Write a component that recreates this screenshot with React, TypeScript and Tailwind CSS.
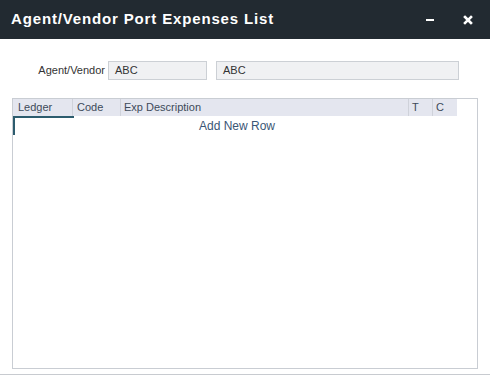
export default function App() {
  return (
    <div className="w-[490px] h-[375px] overflow-hidden bg-white font-['Liberation_Sans',Arial,sans-serif]">
      <div className="h-[39px] bg-[#222a31] flex items-center pl-[11px] pr-[17px]">
        <span className="text-white font-bold text-[15px] tracking-[0.85px] flex-1">
          Agent/Vendor Port Expenses List
        </span>
        <span className="w-[8px] h-[2px] bg-white mr-[29px] mt-[1px]" />
        <svg width="10" height="10" viewBox="0 0 10 10" className="mt-[1px]">
          <path d="M2 2 L8 8 M8 2 L2 8" stroke="white" strokeWidth="2.6" strokeLinecap="square" />
        </svg>
      </div>

      <div className="flex items-center mt-[22px] h-[18px] text-[11px]">
        <span className="w-[108px] text-right text-[#333] pr-[3px]">Agent/Vendor</span>
        <div className="w-[99px] h-[19px] bg-[#f0f1f3] border border-[#ccd0d5] text-[#333] pl-[6px] leading-[17px]">
          ABC
        </div>
        <div className="ml-[9px] w-[243px] h-[19px] bg-[#f0f1f3] border border-[#ccd0d5] text-[#333] pl-[6px] leading-[17px]">
          ABC
        </div>
      </div>

      <div className="ml-[12px] mt-[19px] w-[466px] h-[271px] border border-[#c9cdd3] bg-white">
        <div className="flex h-[17px] text-[11px] text-[#3d4a5a]">
          <div className="w-[60px] bg-[#e4e6ef] border-r border-[#cfd2da] pl-[5px] leading-[17px]">Ledger</div>
          <div className="w-[48px] bg-[#e4e6ef] border-r border-[#cfd2da] pl-[4px] leading-[17px]">Code</div>
          <div className="w-[288px] bg-[#e4e6ef] border-r border-[#cfd2da] pl-[3px] leading-[17px]">Exp Description</div>
          <div className="w-[24px] bg-[#e4e6ef] border-r border-[#cfd2da] pl-[3px] leading-[17px]">T</div>
          <div className="w-[24px] bg-[#e4e6ef] pl-[3px] leading-[17px]">C</div>
        </div>
        <div className="relative h-[19px]">
          <div className="absolute left-0 top-0 w-[61px] h-[2px] bg-[#2c5c6e]" />
          <div className="absolute left-0 top-0 w-[2px] h-[19px] bg-[#2c5c6e]" />
          <div className="text-center text-[12px] text-[#3a5675] leading-[17px] pt-[2px] pr-[16px]">Add New Row</div>
        </div>
      </div>

      <div className="mt-[5px] border-t-[2px] border-[#c8cbd0] h-[10px] pl-[122px] text-[12px] text-[#3a5675] leading-[12px]">
        Add New Row
      </div>
    </div>
  );
}
